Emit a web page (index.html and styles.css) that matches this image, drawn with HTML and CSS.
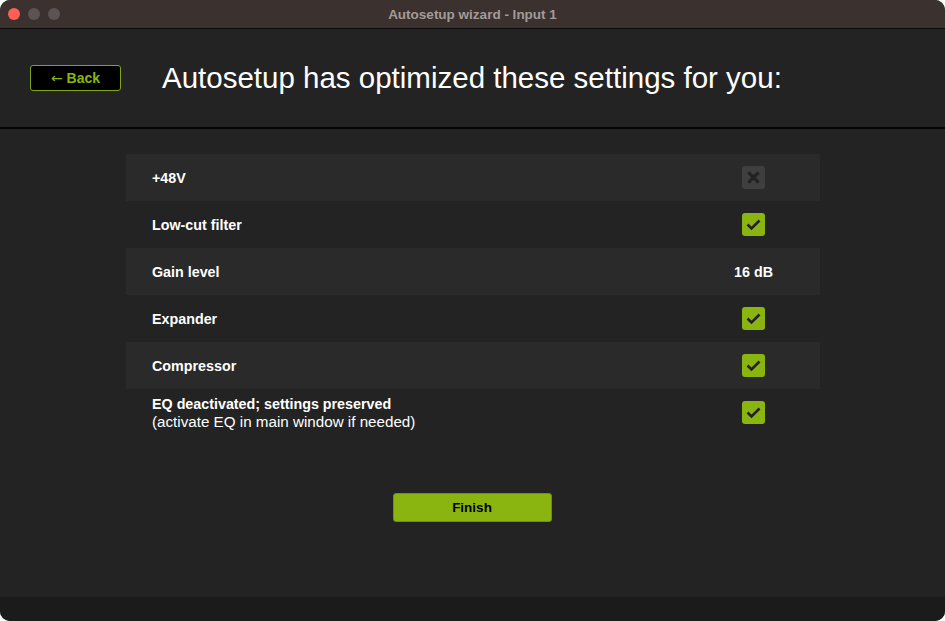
FILE: index.html
```html
<!DOCTYPE html>
<html>
<head>
<meta charset="utf-8">
<link rel="stylesheet" href="styles.css">
</head>
<body>
<div class="window">
  <div class="titlebar">
    <div class="lights">
      <span class="light red"></span>
      <span class="light grey"></span>
      <span class="light grey"></span>
    </div>
    <div class="wintitle">Autosetup wizard - Input 1</div>
  </div>
  <div class="header">
    <button class="back"><span class="arrow">&larr;</span> Back</button>
    <h1 class="headline">Autosetup has optimized these settings for you:</h1>
  </div>
  <div class="main">
    <div class="table">
      <div class="row shade">
        <div class="label">+48V</div>
        <div class="val"><span class="box off"><svg viewBox="0 0 23 23" width="23" height="23"><path d="M7.5 7.5 L15.5 15.5 M15.5 7.5 L7.5 15.5" stroke="#232323" stroke-width="3.2" stroke-linecap="square"/></svg></span></div>
      </div>
      <div class="row">
        <div class="label">Low-cut filter</div>
        <div class="val"><span class="box on"><svg viewBox="0 0 23 23" width="23" height="23"><path d="M5.5 11.5 L9.5 15.5 L17.5 7.5" fill="none" stroke="#222" stroke-width="2.6"/></svg></span></div>
      </div>
      <div class="row shade">
        <div class="label">Gain level</div>
        <div class="val"><span class="num">16 dB</span></div>
      </div>
      <div class="row">
        <div class="label">Expander</div>
        <div class="val"><span class="box on"><svg viewBox="0 0 23 23" width="23" height="23"><path d="M5.5 11.5 L9.5 15.5 L17.5 7.5" fill="none" stroke="#222" stroke-width="2.6"/></svg></span></div>
      </div>
      <div class="row shade">
        <div class="label">Compressor</div>
        <div class="val"><span class="box on"><svg viewBox="0 0 23 23" width="23" height="23"><path d="M5.5 11.5 L9.5 15.5 L17.5 7.5" fill="none" stroke="#222" stroke-width="2.6"/></svg></span></div>
      </div>
      <div class="row">
        <div class="label">EQ deactivated; settings preserved<br><span class="sub">(activate EQ in main window if needed)</span></div>
        <div class="val"><span class="box on"><svg viewBox="0 0 23 23" width="23" height="23"><path d="M5.5 11.5 L9.5 15.5 L17.5 7.5" fill="none" stroke="#222" stroke-width="2.6"/></svg></span></div>
      </div>
    </div>
    <div class="actions">
      <button class="finish">Finish</button>
    </div>
  </div>
  <div class="footer"></div>
</div>
</body>
</html>
```

FILE: styles.css
```css
* { box-sizing: border-box; }
html, body { margin: 0; padding: 0; background: #ffffff; }
body { font-family: "Liberation Sans", Arial, sans-serif; }
.window {
  width: 945px;
  height: 621px;
  border-radius: 10px;
  overflow: hidden;
  background: #232323;
  display: flex;
  flex-direction: column;
}
.titlebar {
  height: 29px;
  background: #3b3230;
  border-bottom: 1px solid #0a0a0a;
  position: relative;
  display: flex;
  align-items: center;
  justify-content: center;
  flex: none;
}
.lights {
  position: absolute;
  left: 8px;
  top: 8px;
  display: flex;
  gap: 8px;
}
.light { width: 12px; height: 12px; border-radius: 50%; display: block; }
.light.red { background: #fe5f57; }
.light.grey { background: #5b5452; }
.wintitle {
  color: #a39b98;
  font-size: 13.5px;
  font-weight: bold;
}
.header {
  height: 100px;
  flex: none;
  display: flex;
  align-items: center;
  border-bottom: 2px solid #050505;
  padding-left: 30px;
}
.back {
  width: 91px;
  height: 26px;
  background: #000;
  border: 1px solid #7fa516;
  border-radius: 3px;
  color: #8ab511;
  font-family: "Liberation Sans", Arial, sans-serif;
  font-weight: bold;
  font-size: 14px;
  padding: 0;
}
.arrow {
  font-family: "DejaVu Sans", sans-serif;
  font-weight: normal;
  font-size: 14px;
}
.headline {
  margin: 0 0 0 41px;
  color: #ffffff;
  font-weight: normal;
  font-size: 29.5px;
}
.main {
  flex: 1;
  padding-top: 25px;
  display: flex;
  flex-direction: column;
  align-items: center;
}
.table { width: 694px; margin-left: 1px; }
.row {
  height: 47px;
  display: grid;
  grid-template-columns: 1fr 133px;
  align-items: center;
}
.row.shade { background: #2a2a2a; }
.label {
  padding-left: 26px;
  color: #ffffff;
  font-weight: bold;
  font-size: 14.3px;
  line-height: 18px;
}
.sub { font-weight: normal; font-size: 15.2px; }
.val { display: flex; justify-content: center; }
.box {
  width: 23px;
  height: 23px;
  border-radius: 3px;
  display: block;
}
.box svg { display: block; }
.box.on { background: #8ab511; }
.box.off { background: #3f3f3f; }
.num { color: #ffffff; font-weight: bold; font-size: 14.3px; }
.actions { margin-top: 57px; display: flex; justify-content: center; }
.finish {
  width: 159px;
  height: 29px;
  margin-left: -1px;
  background: #8ab511;
  border: 1px solid #6f9110;
  border-radius: 3px;
  color: #000;
  font-family: "Liberation Sans", Arial, sans-serif;
  font-weight: bold;
  font-size: 13.5px;
  padding: 0;
}
.footer { height: 24px; background: #1b1b1b; flex: none; }
```
